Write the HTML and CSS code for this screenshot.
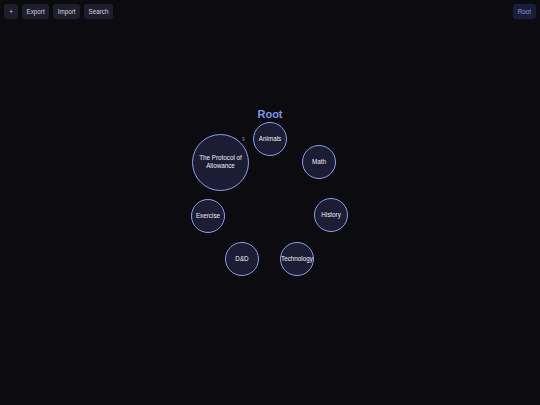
FILE: index.html
```html
<!DOCTYPE html>
<html>
<head>
<meta charset="utf-8">
<link rel="stylesheet" href="styles.css">
</head>
<body>
<div class="app">
  <div class="toolbar">
    <div class="tools">
      <button class="btn">+</button>
      <button class="btn">Export</button>
      <button class="btn">Import</button>
      <button class="btn">Search</button>
    </div>
    <button class="btn crumb">Root</button>
  </div>
  <div class="canvas">
    <div class="root-label">Root</div>
    <div class="node" style="left:253px;top:122px;">Animals</div>
    <div class="node" style="left:302px;top:145px;">Math</div>
    <div class="node" style="left:314px;top:198px;">History</div>
    <div class="node" style="left:280px;top:242px;">Technology</div>
    <div class="node" style="left:225px;top:242px;">D&amp;D</div>
    <div class="node" style="left:191px;top:199px;">Exercise</div>
    <div class="node big" style="left:192px;top:134px;">The Protocol of Allowance</div>
    <div class="badge">9</div>
  </div>
</div>
</body>
</html>
```
FILE: styles.css
```css
html, body {
  margin: 0;
  padding: 0;
  background: #0b0b10;
  width: 540px;
  height: 405px;
  overflow: hidden;
  font-family: "Liberation Sans", Arial, sans-serif;
}
.app {
  position: relative;
  width: 540px;
  height: 405px;
}
.toolbar {
  display: flex;
  justify-content: space-between;
  align-items: center;
  padding: 4px 4px 0 4px;
}
.tools {
  display: flex;
  gap: 4px;
}
.btn {
  font-family: "Liberation Sans", Arial, sans-serif;
  font-size: 6.3px;
  color: #d4d4e2;
  background: #1e1e2c;
  border: none;
  border-radius: 3px;
  height: 15px;
  padding: 0 4.5px;
  line-height: 15px;
}
.tools .btn:first-child {
  width: 14px;
  padding: 0;
}
.crumb {
  background: #1b1e3a;
  color: #8597dc;
  padding: 0 5px;
}
.canvas {
  position: absolute;
  inset: 0;
}
.root-label {
  position: absolute;
  left: 240px;
  top: 107px;
  width: 60px;
  text-align: center;
  color: #7f98e6;
  font-weight: bold;
  font-size: 11px;
  line-height: 14px;
}
.node {
  position: absolute;
  width: 32px;
  height: 32px;
  box-sizing: content-box;
  border-radius: 50%;
  border: 1px solid #8a9fe8;
  background: #1c1c34;
  color: #eeeef6;
  font-size: 6.3px;
  display: flex;
  align-items: center;
  justify-content: center;
  text-align: center;
  line-height: 8px;
  white-space: nowrap;
}
.node.big {
  white-space: normal;
  padding: 0 4px 2px 4px;
  box-sizing: border-box;
  width: 57px;
  height: 57px;
}
.badge {
  position: absolute;
  left: 242px;
  top: 136px;
  font-size: 5px;
  color: #8a8aa0;
}
```
